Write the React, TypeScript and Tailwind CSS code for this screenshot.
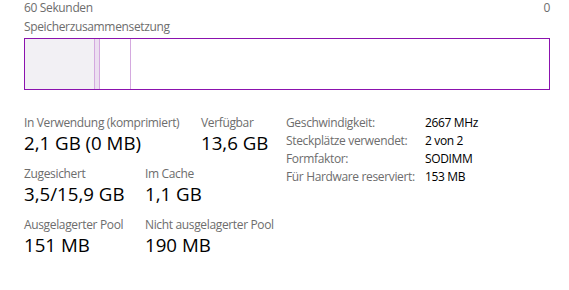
import React from "react";

const Stat: React.FC<{ label: string; value: string; width?: string }> = ({ label, value, width }) => (
    <div className={`flex flex-col ${width || ""}`}>
        <span className="text-[12px] leading-[16px] tracking-[-0.35px] text-[#6d6d6d] whitespace-nowrap">{label}</span>
        <span className="text-[18.7px] leading-[24px] text-black whitespace-nowrap">{value}</span>
    </div>
)

const specs: [string, string][] = [
    ["Geschwindigkeit:", "2667 MHz"],
    ["Steckplätze verwendet:", "2 von 2"],
    ["Formfaktor:", "SODIMM"],
    ["Für Hardware reserviert:", "153 MB"],
]

export default function App() {
    return (
        <div
            className="w-[569px] h-[290px] bg-white pl-[24px] overflow-hidden"
            style={{ fontFamily: '"Segoe UI", "Open Sans", "Noto Sans", sans-serif' }}
        >
            <div className="w-[526px]">
                <div className="flex justify-between text-[12px] leading-[16px] tracking-[-0.35px] text-[#6d6d6d]">
                    <span>60 Sekunden</span>
                    <span>0</span>
                </div>
                <div className="mt-[3px] text-[12px] leading-[16px] tracking-[-0.35px] text-[#6d6d6d]">Speicherzusammensetzung</div>
                <div className="mt-[3px] flex h-[52px] border border-[#8b12ae]">
                    <div className="w-[70px] bg-[#f2f0f4] border-r border-[#d4a9df]" />
                    <div className="w-[5px] bg-[#ecdff0] border-r border-[#d4a9df]" />
                    <div className="w-[31px] border-r border-[#d4a9df]" />
                    <div className="flex-1" />
                </div>
            </div>

            <div className="mt-[25px] flex">
                <div className="w-[262px] flex flex-col gap-[11px]">
                    <div className="flex">
                        <Stat label="In Verwendung (komprimiert)" value="2,1 GB (0 MB)" width="w-[177px]" />
                        <Stat label="Verfügbar" value="13,6 GB" />
                    </div>
                    <div className="flex">
                        <Stat label="Zugesichert" value="3,5/15,9 GB" width="w-[121px]" />
                        <Stat label="Im Cache" value="1,1 GB" />
                    </div>
                    <div className="flex">
                        <Stat label="Ausgelagerter Pool" value="151 MB" width="w-[121px]" />
                        <Stat label="Nicht ausgelagerter Pool" value="190 MB" />
                    </div>
                </div>
                <div className="-mt-[1px] grid grid-cols-[139px_auto] text-[12px] leading-[18px] tracking-[-0.35px] h-fit">
                    {specs.map(([k, v]) => (
                        <React.Fragment key={k}>
                            <span className="text-[#6d6d6d] whitespace-nowrap">{k}</span>
                            <span className="text-black whitespace-nowrap">{v}</span>
                        </React.Fragment>
                    ))}
                </div>
            </div>
        </div>
    )
}
